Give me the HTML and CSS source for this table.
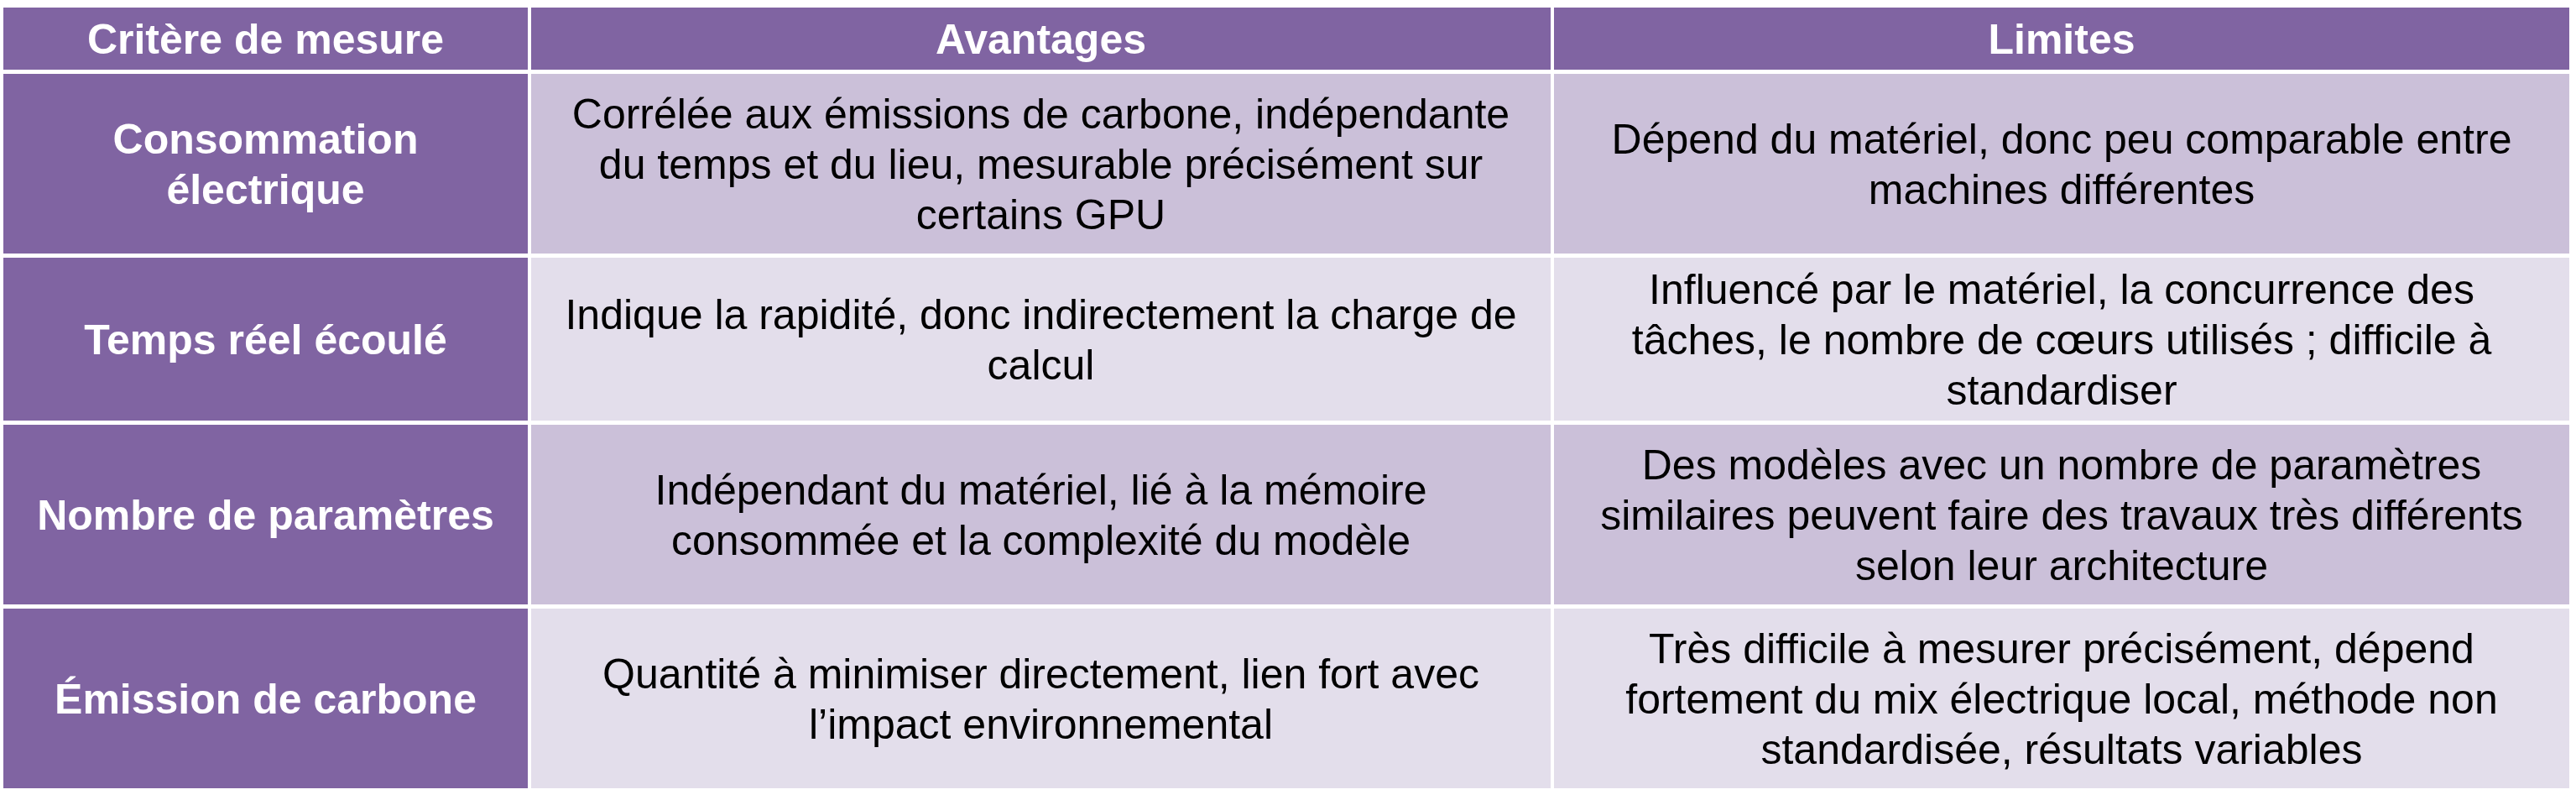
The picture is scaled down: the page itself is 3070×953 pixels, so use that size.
FILE: index.html
```html
<!DOCTYPE html>
<html lang="fr">
<head>
<meta charset="utf-8">
<title>Critères de mesure</title>
<link rel="stylesheet" href="styles.css">
</head>
<body>
<div class="table">
  <div class="cell head">Critère de mesure</div>
  <div class="cell head">Avantages</div>
  <div class="cell head">Limites</div>

  <div class="cell crit">Consommation<br>électrique</div>
  <div class="cell band1">Corrélée aux émissions de carbone, indépendante<br>du temps et du lieu, mesurable précisément sur<br>certains GPU</div>
  <div class="cell band1">Dépend du matériel, donc peu comparable entre<br>machines différentes</div>

  <div class="cell crit">Temps réel écoulé</div>
  <div class="cell band2">Indique la rapidité, donc indirectement la charge de<br>calcul</div>
  <div class="cell band2">Influencé par le matériel, la concurrence des<br>tâches, le nombre de cœurs utilisés ; difficile à<br>standardiser</div>

  <div class="cell crit">Nombre de paramètres</div>
  <div class="cell band1">Indépendant du matériel, lié à la mémoire<br>consommée et la complexité du modèle</div>
  <div class="cell band1">Des modèles avec un nombre de paramètres<br>similaires peuvent faire des travaux très différents<br>selon leur architecture</div>

  <div class="cell crit">Émission de carbone</div>
  <div class="cell band2">Quantité à minimiser directement, lien fort avec<br>l’impact environnemental</div>
  <div class="cell band2">Très difficile à mesurer précisément, dépend<br>fortement du mix électrique local, méthode non<br>standardisée, résultats variables</div>
</div>
</body>
</html>
```
FILE: styles.css
```css
html, body {
  margin: 0;
  padding: 0;
  background: #ffffff;
}

body {
  font-family: "Liberation Sans", Arial, sans-serif;
}

.table {
  display: grid;
  grid-template-columns: 625px 1215px 1210px;
  grid-template-rows: 74px 214px 194px 214px 214px;
  column-gap: 4px;
  row-gap: 5px;
  margin: 9px 0 0 4px;
  width: 3058px;
}

.cell {
  display: flex;
  align-items: center;
  justify-content: center;
  text-align: center;
  font-size: 50px;
  line-height: 60px;
  padding: 2px 8px 0;
  color: #000000;
  white-space: nowrap;
}

.head {
  background: #8064a2;
  color: #ffffff;
  font-weight: bold;
}

.crit {
  background: #8064a2;
  color: #ffffff;
  font-weight: bold;
}

.band1 {
  background: #cbc0d9;
}

.band2 {
  background: #e3deeb;
}
```
